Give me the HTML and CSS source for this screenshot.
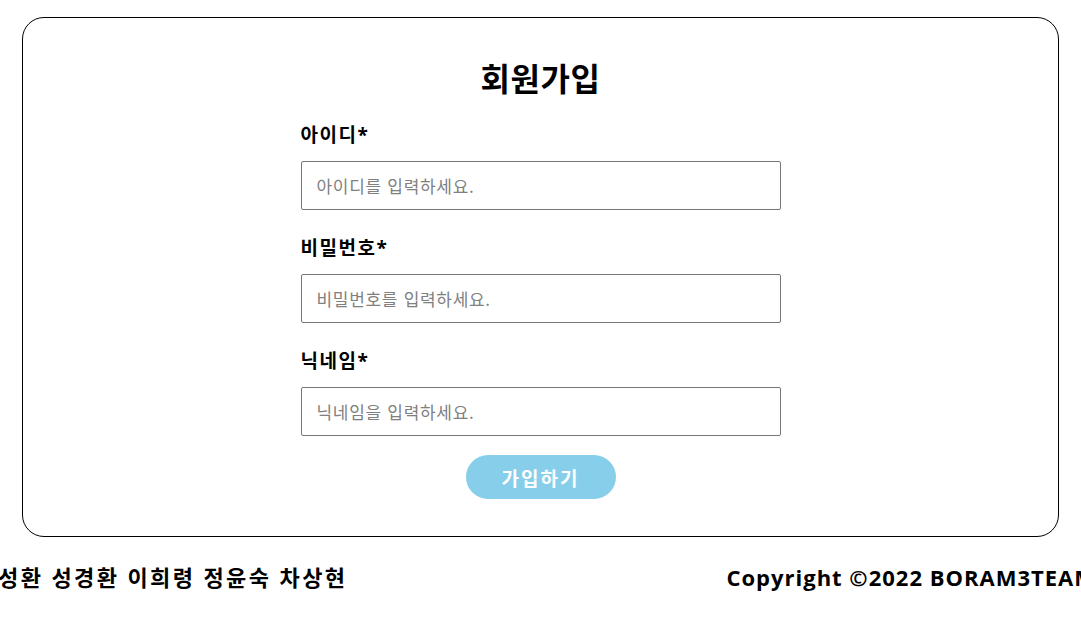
FILE: index.html
```html
<!DOCTYPE html>
<html lang="ko">
<head>
<meta charset="utf-8">
<title>회원가입</title>
<link rel="stylesheet" href="styles.css">
</head>
<body>
<main class="card">
  <h1 class="title">회원가입</h1>
  <form class="form">
    <div class="field">
      <label class="label" for="uid">아이디*</label>
      <input class="input" id="uid" type="text" placeholder="아이디를 입력하세요.">
    </div>
    <div class="field">
      <label class="label" for="pw">비밀번호*</label>
      <input class="input" id="pw" type="password" placeholder="비밀번호를 입력하세요.">
    </div>
    <div class="field">
      <label class="label" for="nick">닉네임*</label>
      <input class="input" id="nick" type="text" placeholder="닉네임을 입력하세요.">
    </div>
    <button class="submit" type="button">가입하기</button>
  </form>
</main>
<footer class="footer">
  <span class="names">성환 성경환 이희령 정윤숙 차상현</span>
  <span class="copy">Copyright ©2022 BORAM3TEAM</span>
</footer>
</body>
</html>
```
FILE: styles.css
```css
html, body {
  margin: 0;
  padding: 0;
  overflow: hidden;
  background: #fff;
}
body {
  font-family: "Open Sans", "Noto Sans CJK KR", sans-serif;
  color: #000;
}
.card {
  margin: 17px 22px 0;
  border: 1px solid #000;
  border-radius: 22px;
  padding: 40px 0 37px;
  display: flex;
  flex-direction: column;
  align-items: center;
}
.title {
  margin: 0;
  font-size: 32px;
  line-height: 42px;
  font-weight: 700;
  letter-spacing: 0.5px;
}
.form {
  width: 480px;
  display: flex;
  flex-direction: column;
  margin-top: 23px;
}
.field {
  display: flex;
  flex-direction: column;
  margin-bottom: 26px;
}
.field:last-of-type {
  margin-bottom: 19px;
}
.label {
  font-size: 19px;
  line-height: 24px;
  font-weight: 700;
  letter-spacing: 1.5px;
  margin-bottom: 14px;
}
.input {
  box-sizing: border-box;
  height: 49px;
  border: 1px solid #767676;
  border-radius: 2px;
  padding: 0 15px;
  font-family: "Noto Sans CJK KR", sans-serif;
  font-size: 17px;
  letter-spacing: 0.7px;
  color: #000;
  outline: none;
}
.input::placeholder {
  color: #808080;
}
.submit {
  align-self: center;
  width: 150px;
  height: 44px;
  border: none;
  border-radius: 22px;
  background: #87ceeb;
  color: #fff;
  font-family: "Noto Sans CJK KR", sans-serif;
  font-size: 19px;
  font-weight: 700;
  letter-spacing: 2px;
  cursor: pointer;
}
.footer {
  display: flex;
  justify-content: space-between;
  align-items: center;
  margin: 25px -15px 0 -2px;
  font-weight: 700;
  line-height: 30px;
}
.names {
  font-size: 22px;
  letter-spacing: 2.4px;
}
.copy {
  font-size: 22px;
  letter-spacing: 1px;
}
```
